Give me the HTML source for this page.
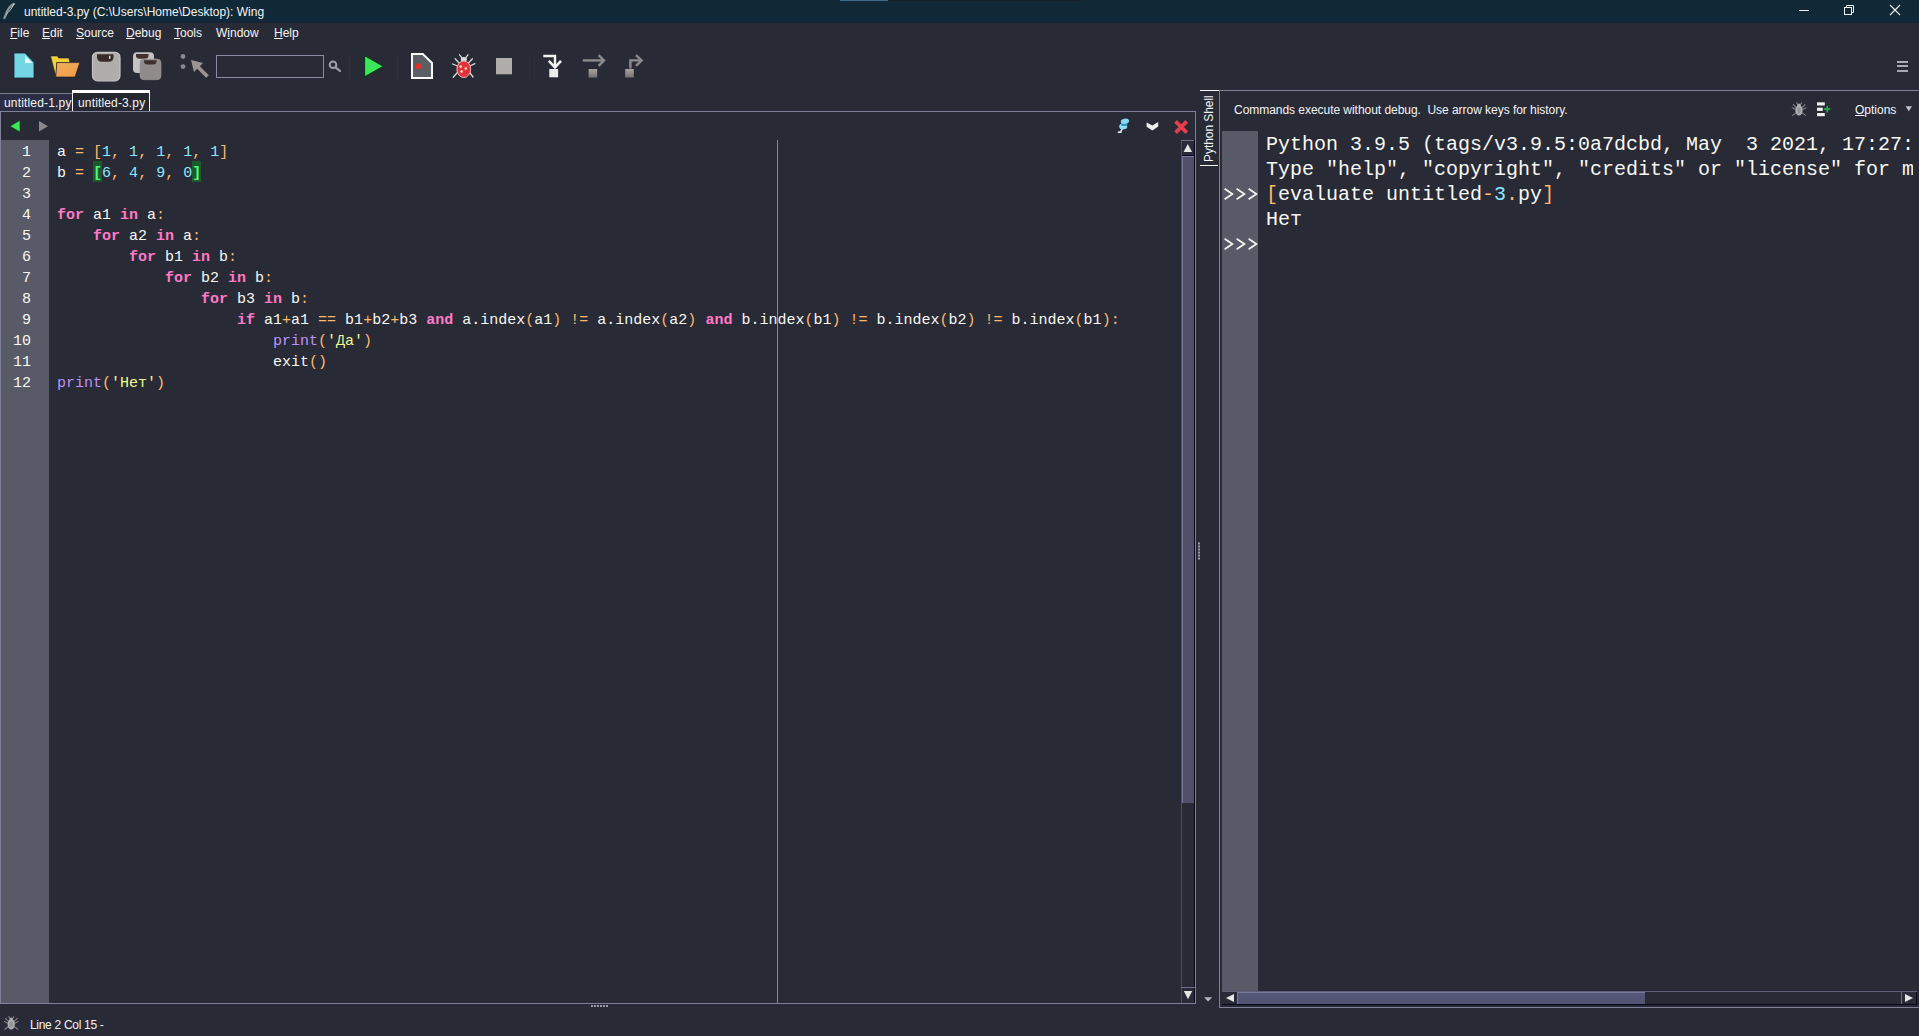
<!DOCTYPE html>
<html>
<head>
<meta charset="utf-8">
<title>Wing</title>
<style>
html,body{margin:0;padding:0;}
html{overflow:hidden;}
body{width:1919px;height:1036px;overflow:hidden;background:#282a36;font-family:"Liberation Sans",sans-serif;font-size:12px;color:#f4f4f4;position:relative;}
.abs{position:absolute;}
.t{position:absolute;white-space:pre;line-height:1;transform-origin:0 0;}
#titlebar{left:0;top:0;width:1919px;height:23px;background:linear-gradient(#112837 0,#112837 16px,#0f2a38 17px,#0f2a38 19px,#152638 20px,#162639 23px);}
.menu u,.ul{text-decoration:underline;text-decoration-thickness:1px;text-underline-offset:1px;}
.ln{position:absolute;background:#7f819a;}
.code{position:absolute;white-space:pre;font-family:"Liberation Mono",monospace;font-size:15px;line-height:21px;color:#f8f8f2;}
.num{position:absolute;white-space:pre;font-family:"Liberation Mono",monospace;font-size:15px;line-height:21px;color:#f8f8f2;text-align:right;}
.sh{position:absolute;white-space:pre;font-family:"Liberation Mono",monospace;font-size:20px;line-height:25px;color:#f8f8f2;}
.k{color:#ff79c6;font-weight:bold;}
.o{color:#ffb86c;}
.n{color:#8be9fd;}
.s{color:#f1fa8c;}
.b{color:#bd93f9;}
.bm{color:#50fa7b;font-weight:bold;}
</style>
</head>
<body>
<!-- title bar -->
<div id="titlebar" class="abs"></div>
<div class="t" id="title" style="left:24px;top:6px;">untitled-3.py (C:\Users\Home\Desktop): Wing</div>

<div class="abs" style="left:840px;top:0;width:48px;height:1px;background:#3f6c84;"></div>
<div class="abs" style="left:888px;top:0;width:192px;height:1px;background:#182028;"></div>
<!-- menu -->
<div class="t menu" id="m1" style="left:10px;top:27px;"><u>F</u>ile</div>
<div class="t menu" id="m2" style="left:42px;top:27px;"><u>E</u>dit</div>
<div class="t menu" id="m3" style="left:76px;top:27px;"><u>S</u>ource</div>
<div class="t menu" id="m4" style="left:126px;top:27px;"><u>D</u>ebug</div>
<div class="t menu" id="m5" style="left:174px;top:27px;"><u>T</u>ools</div>
<div class="t menu" id="m6" style="left:216px;top:27px;">W<u>i</u>ndow</div>
<div class="t menu" id="m7" style="left:274px;top:27px;"><u>H</u>elp</div>

<!-- editor frame -->
<div class="ln" style="left:0;top:111px;width:1196px;height:1px;"></div>
<div class="ln" style="left:0;top:93px;width:1px;height:911px;"></div>
<div class="ln" style="left:1195px;top:111px;width:1px;height:893px;"></div>
<div class="ln" style="left:0;top:1003px;width:1196px;height:1px;"></div>

<!-- gutter -->
<div class="abs" style="left:1px;top:140px;width:48px;height:863px;background:#585a67;"></div>

<!-- edge line -->
<div class="abs" style="left:777px;top:140px;width:1px;height:863px;background:#48a39b;"></div>

<!-- code -->
<div class="abs" style="left:93px;top:161px;width:9px;height:21px;background:#1c5a2c;"></div>
<div class="abs" style="left:192px;top:161px;width:9px;height:21px;background:#1c5a2c;"></div>
<div class="num" style="left:1px;top:142px;width:30px;">1
2
3
4
5
6
7
8
9
10
11
12</div>
<div class="code" id="code" style="left:57px;top:142px;">a <span class="o">=</span> <span class="o">[</span><span class="n">1</span><span class="o">,</span> <span class="n">1</span><span class="o">,</span> <span class="n">1</span><span class="o">,</span> <span class="n">1</span><span class="o">,</span> <span class="n">1</span><span class="o">]</span>
b <span class="o">=</span> <span class="bm">[</span><span class="n">6</span><span class="o">,</span> <span class="n">4</span><span class="o">,</span> <span class="n">9</span><span class="o">,</span> <span class="n">0</span><span class="bm">]</span>

<span class="k">for</span> a1 <span class="k">in</span> a<span class="o">:</span>
    <span class="k">for</span> a2 <span class="k">in</span> a<span class="o">:</span>
        <span class="k">for</span> b1 <span class="k">in</span> b<span class="o">:</span>
            <span class="k">for</span> b2 <span class="k">in</span> b<span class="o">:</span>
                <span class="k">for</span> b3 <span class="k">in</span> b<span class="o">:</span>
                    <span class="k">if</span> a1<span class="o">+</span>a1 <span class="o">==</span> b1<span class="o">+</span>b2<span class="o">+</span>b3 <span class="k">and</span> a.index<span class="o">(</span>a1<span class="o">)</span> <span class="o">!=</span> a.index<span class="o">(</span>a2<span class="o">)</span> <span class="k">and</span> b.index<span class="o">(</span>b1<span class="o">)</span> <span class="o">!=</span> b.index<span class="o">(</span>b2<span class="o">)</span> <span class="o">!=</span> b.index<span class="o">(</span>b1<span class="o">)</span><span class="o">:</span>
                        <span class="b">print</span><span class="o">(</span><span class="s">'Да'</span><span class="o">)</span>
                        exit<span class="o">()</span>
<span class="b">print</span><span class="o">(</span><span class="s">'Нет'</span><span class="o">)</span></div>


<!-- window controls -->
<svg class="abs" style="left:1780px;top:0;" width="139" height="23" viewBox="1780 0 139 23">
  <rect x="1799" y="10" width="10" height="1" fill="#f0f0f0"/>
  <rect x="1844.5" y="7.5" width="7" height="7" fill="none" stroke="#f0f0f0" stroke-width="1"/>
  <path d="M1846.5 7.5 V5.5 H1853.5 V12.5 H1851.5" fill="none" stroke="#f0f0f0" stroke-width="1"/>
  <path d="M1890 5 L1900 15 M1900 5 L1890 15" stroke="#f0f0f0" stroke-width="1.1" fill="none"/>
</svg>
<!-- app icon (feather) -->
<svg class="abs" style="left:0;top:0;" width="22" height="23" viewBox="0 0 22 23">
  <path d="M14 3.8 C10 6 7 10.5 6 14.5 L4.3 18" stroke="#8d949c" stroke-width="2.2" fill="none" stroke-linecap="round"/>
  <path d="M14 3.8 C12 8 9.5 11.5 6 14.5" stroke="#cdd2d6" stroke-width="1" fill="none"/>
</svg>

<!-- toolbar icons -->
<svg class="abs" style="left:0;top:44px;" width="700" height="44" viewBox="0 44 700 44">
  <defs>
    <linearGradient id="gsq" x1="0" y1="0" x2="0" y2="1"><stop offset="0" stop-color="#a8a4a4"/><stop offset="1" stop-color="#767272"/></linearGradient>
    <linearGradient id="gfold" x1="0" y1="0" x2="1" y2="1"><stop offset="0" stop-color="#f0b060"/><stop offset="1" stop-color="#f09a40"/></linearGradient>
  </defs>
  <!-- new -->
  <path d="M14 53 H25 L34 62.5 V78 H14 Z" fill="#74d6e4" stroke="#1a2530" stroke-width="0.8"/>
  <path d="M25 56 V63 H32.5 Z" fill="#e8fbff"/>
  <!-- open -->
  <path d="M50.5 56 H57.6 L58.6 58 H68.8 L70 62.6 H56.8 L56 77 Z" fill="#f2d23c" stroke="#1a1a20" stroke-width="0.6"/>
  <path d="M56.8 62.6 H79.8 L75 77 H55.8 Z" fill="url(#gfold)" stroke="#1a1a20" stroke-width="0.6"/>
  <!-- save -->
  <rect x="92.5" y="52.3" width="27.5" height="28.5" rx="5" fill="#b0aeaa" stroke="#c6c4c6" stroke-width="1.2"/>
  <path d="M97 54.2 H113.5 V57 Q113.5 61.8 108.5 61.8 H102 Q97 61.8 97 57 Z" fill="#3a2b2a"/>
  <rect x="109" y="55.8" width="1.4" height="3" fill="#e8e0e0"/>
  <!-- save all -->
  <rect x="133" y="52.3" width="21" height="20.7" rx="4" fill="#c4c2c2"/>
  <path d="M136 54 H148.5 V55.5 Q148.5 58.8 145 58.8 H139.5 Q136 58.8 136 55.5 Z" fill="#40302c"/>
  <rect x="140" y="59" width="21" height="20.7" rx="4" fill="#8f8b8b" stroke="#a09c9c" stroke-width="0.6"/>
  <path d="M144 60.2 H156.5 V61.5 Q156.5 64.5 153 64.5 H147.5 Q144 64.5 144 61.5 Z" fill="#40302c"/>
  <!-- goto-definition: dots + arrow -->
  <circle cx="183" cy="56.5" r="2.4" fill="#8a8894"/>
  <circle cx="183" cy="66.6" r="2.4" fill="#8a8894"/>
  <path d="M191 60 L203 63 L199.84 66.16 L208.84 75.16 L206.16 77.84 L197.16 68.84 L194 72 Z" fill="#9a9492"/>
  <!-- search box -->
  <rect x="216.5" y="55.5" width="107" height="22" fill="none" stroke="#8a8ca6" stroke-width="1"/>
  <circle cx="333" cy="64.8" r="3.3" fill="none" stroke="#a0a0aa" stroke-width="2"/>
  <path d="M335.5 67.3 L340 71" stroke="#a0a0aa" stroke-width="2.2" stroke-linecap="round"/>
  <!-- run -->
  <path d="M364.5 55.5 L383.5 66.3 L364.5 77 Z" fill="#3ce65a" stroke="#0c3a18" stroke-width="1.2"/>
  <!-- doc with record -->
  <path d="M412 54 H422.8 L432 63 V78 H412 Z" fill="#5a5f66" stroke="#f8f8f8" stroke-width="2"/>
  <circle cx="418.3" cy="66.2" r="3" fill="#e23028"/>
  <!-- bug -->
  <g stroke="#d8dcd8" stroke-width="1.3" stroke-linecap="round" fill="none">
    <path d="M459.6 54.8 L462.3 58.3"/><path d="M468 54.8 L465.3 58.3"/>
    <path d="M455.2 58.7 L459.5 63.5"/><path d="M472.4 58.7 L468 63.5"/>
    <path d="M452.6 64 L457.5 66"/><path d="M474.8 63.6 L470 66"/>
    <path d="M453.2 77.2 L458.3 71.5"/><path d="M473 77 L469 71.5"/>
  </g>
  <ellipse cx="463.8" cy="59.5" rx="3" ry="2.4" fill="#d8dcd8"/>
  <ellipse cx="463.8" cy="69.2" rx="6.9" ry="8.3" fill="#e1313e" stroke="#f2b8b8" stroke-width="1"/>
  <circle cx="460.7" cy="66.6" r="1.3" fill="#ffe0b0"/>
  <circle cx="465.8" cy="68.5" r="1.3" fill="#ffe0b0"/>
  <circle cx="461.6" cy="71.6" r="1.3" fill="#ffe0b0"/>
  <!-- stop -->
  <rect x="496" y="58" width="16" height="16.3" fill="#b0aeaa"/>
  <!-- step into -->
  <path d="M543.3 56 H555 V66" fill="none" stroke="#f2f2f2" stroke-width="2.4"/>
  <path d="M548.8 60.8 L555 67.3 L561 60.8" fill="none" stroke="#f2f2f2" stroke-width="2.6"/>
  <rect x="549.3" y="69" width="8.8" height="8.3" fill="#ececec"/>
  <!-- step over -->
  <path d="M582.8 60.4 H603" fill="none" stroke="#8c8a8c" stroke-width="2.4"/>
  <path d="M598.6 55.2 L604 60.4 L598.6 65.8" fill="none" stroke="#8c8a8c" stroke-width="2.4"/>
  <rect x="588.6" y="69" width="8.6" height="8.5" fill="url(#gsq)"/>
  <!-- step out -->
  <path d="M630.4 68.5 V60.4 H641" fill="none" stroke="#8c8a8c" stroke-width="2.4"/>
  <path d="M636 55.2 L641.6 60.4 L636 65.8" fill="none" stroke="#8c8a8c" stroke-width="2.4"/>
  <rect x="625.2" y="69" width="8.6" height="8.5" fill="url(#gsq)"/>
</svg>
<div class="abs" style="left:349px;top:56px;width:1px;height:24px;background:#2e303d;"></div>
<div class="abs" style="left:397px;top:56px;width:1px;height:24px;background:#2e303d;"></div>
<div class="abs" style="left:529px;top:56px;width:1px;height:24px;background:#2e303d;"></div>
<!-- hamburger -->
<div class="abs" style="left:1897px;top:61px;width:11px;height:2px;background:#a8a8b8;"></div>
<div class="abs" style="left:1897px;top:65px;width:11px;height:2px;background:#a8a8b8;"></div>
<div class="abs" style="left:1897px;top:70px;width:11px;height:2px;background:#a8a8b8;"></div>

<!-- tabs -->
<div class="abs" style="left:0px;top:93px;width:72px;height:18px;background:#2b2d42;border-top:1px solid #7c7e98;box-sizing:border-box;"></div>
<div class="t" id="tab1" style="left:4px;top:97px;letter-spacing:0.17px;">untitled-1.py</div>
<div class="abs" style="left:72px;top:90px;width:78px;height:21px;border:1px solid #f4f4f4;border-top:3px solid #ffffff;border-bottom:none;box-sizing:border-box;background:#262730;"></div>
<div class="t" id="tab2" style="left:78px;top:97px;letter-spacing:0.15px;">untitled-3.py</div>

<!-- nav arrows -->
<svg class="abs" style="left:0;top:112px;" width="60" height="28" viewBox="0 112 60 28">
  <path d="M20 120.3 L10 126.2 L20 132 Z" fill="#3ce65a" stroke="#0c3a18" stroke-width="0.6"/>
  <path d="M39 121 L48 126.2 L39 131.4 Z" fill="#8a888c"/>
</svg>
<!-- editor top right icons -->
<svg class="abs" style="left:1110px;top:112px;" width="85" height="28" viewBox="1110 112 85 28">
  <path d="M1122.4 128.6 L1120.4 132" stroke="#cdeaf4" stroke-width="1.5"/>
  <ellipse cx="1119.7" cy="132.2" rx="2.2" ry="0.9" fill="#e4e6ea"/>
  <ellipse cx="1123.2" cy="126.4" rx="4" ry="2.9" fill="#8fdff4"/>
  <ellipse cx="1124.2" cy="123.9" rx="3.4" ry="2" fill="#2f93ba"/>
  <ellipse cx="1124.9" cy="121.3" rx="4.2" ry="2.6" fill="#86d8ee" transform="rotate(-12 1124.9 121.3)"/>
  <path d="M1146.6 122.4 L1152.4 125.6 L1158.2 122 V126.6 L1152.4 130.6 L1146.6 126.8 Z" fill="#eceef0"/>
  <path d="M1175.6 121.4 L1186.8 132.6 M1186.8 121.4 L1175.6 132.6" stroke="#e63e4a" stroke-width="3.8" fill="none"/>
</svg>

<!-- editor vertical scrollbar -->
<div class="abs" style="left:1181px;top:140px;width:14px;height:863px;background:#282a36;"></div>
<div class="abs" style="left:1181px;top:140px;width:1px;height:863px;background:#4c4e60;"></div>
<div class="abs" style="left:1194px;top:140px;width:1px;height:863px;background:#06061a;"></div>
<div class="abs" style="left:1181px;top:140px;width:13px;height:1px;background:#6e7088;"></div>
<div class="abs" style="left:1182px;top:155px;width:12px;height:1px;background:#06061a;"></div>
<div class="abs" style="left:1182px;top:157px;width:12px;height:646px;background:#50506a;"></div>
<div class="abs" style="left:1182px;top:157px;width:1px;height:646px;background:#777a98;"></div>
<div class="abs" style="left:1182px;top:156px;width:12px;height:1px;background:#777a98;"></div>
<div class="abs" style="left:1181px;top:987px;width:14px;height:1px;background:#6e7088;"></div>
<svg class="abs" style="left:1181px;top:140px;" width="14" height="863" viewBox="1181 140 14 863">
  <path d="M1183.6 152 L1187.8 144 L1192 152 Z" fill="#e6e6e6"/>
  <path d="M1183.8 991 L1192.2 991 L1188 999.2 Z" fill="#e6e6e6"/>
</svg>

<!-- splitter dots -->
<svg class="abs" style="left:1196px;top:540px;" width="6" height="22" viewBox="1196 540 6 22">
  <g fill="#9c9cac"><rect x="1198" y="542.5" width="2" height="2"/><rect x="1198" y="545.5" width="2" height="2"/><rect x="1198" y="548.5" width="2" height="2"/><rect x="1198" y="551.5" width="2" height="2"/><rect x="1198" y="554.5" width="2" height="2"/><rect x="1198" y="557.5" width="2" height="2"/></g>
</svg>
<svg class="abs" style="left:588px;top:1004px;" width="24" height="5" viewBox="588 1004 24 5">
  <g fill="#9c9cac"><rect x="591" y="1005" width="2" height="2"/><rect x="594" y="1005" width="2" height="2"/><rect x="597" y="1005" width="2" height="2"/><rect x="600" y="1005" width="2" height="2"/><rect x="603" y="1005" width="2" height="2"/><rect x="606" y="1005" width="2" height="2"/></g>
</svg>

<!-- python shell vertical tab -->
<div class="abs" style="left:1200px;top:90px;width:19px;height:1px;background:#f4f4f4;"></div>
<div class="abs" style="left:1200px;top:165px;width:18px;height:1px;background:#f4f4f4;"></div>
<div class="t" id="pstab" style="left:1203px;top:161.5px;letter-spacing:-0.06px;transform:rotate(-90deg);transform-origin:0 0;">Python Shell</div>
<svg class="abs" style="left:1202px;top:994px;" width="14" height="10" viewBox="1202 994 14 10">
  <path d="M1204 997.2 H1212.2 L1208.1 1001.6 Z" fill="#b4b4c4"/>
</svg>

<!-- shell header icons -->
<svg class="abs" style="left:1785px;top:96px;" width="134" height="26" viewBox="1785 96 134 26">
  <g stroke="#80828a" stroke-width="1.1" stroke-linecap="round" fill="none">
    <path d="M1796.6 102.8 L1798.2 105.2"/><path d="M1801.6 102.8 L1800 105.2"/>
    <path d="M1793.2 104.6 L1796.8 108"/><path d="M1805 104.6 L1801.4 108"/>
    <path d="M1792.2 107.8 L1796 109.6"/><path d="M1806 107.8 L1802.2 109.6"/>
    <path d="M1792.6 115.4 L1796.6 112.4"/><path d="M1805.6 115.4 L1801.6 112.4"/>
  </g>
  <ellipse cx="1799" cy="105.2" rx="1.8" ry="1.6" fill="#a8aaae"/>
  <ellipse cx="1799" cy="110.4" rx="3.6" ry="5.2" fill="#aeb0b4"/>
  <ellipse cx="1799" cy="110.6" rx="1.8" ry="3.2" fill="#92949a"/>
  <rect x="1817" y="102.3" width="7.8" height="3.2" fill="#efefef"/>
  <rect x="1817" y="107.7" width="5.8" height="3.2" fill="#efefef"/>
  <rect x="1817" y="113" width="7.8" height="3.2" fill="#efefef"/>
  <path d="M1824 109.2 H1830.4 M1827.2 106 V112.4" stroke="#2ca548" stroke-width="1.8"/>
  <path d="M1905.6 106.2 H1912 L1908.8 111.2 Z" fill="#c0c0d0"/>
</svg>

<!-- shell horizontal scrollbar -->
<div class="abs" style="left:1222px;top:991px;width:695px;height:1px;background:#5e6076;"></div>
<div class="abs" style="left:1222px;top:1004px;width:695px;height:1px;background:#06061a;"></div>
<div class="abs" style="left:1238px;top:992px;width:407px;height:12px;background:linear-gradient(#56587c,#525470);"></div>
<div class="abs" style="left:1238px;top:992px;width:407px;height:1px;background:#777a98;"></div>
<div class="abs" style="left:1237px;top:992px;width:1px;height:12px;background:#777a98;"></div>
<div class="abs" style="left:1901px;top:992px;width:1px;height:12px;background:#6e7088;"></div>
<div class="abs" style="left:1916px;top:992px;width:1px;height:13px;background:#06061a;"></div>
<svg class="abs" style="left:1222px;top:991px;" width="697" height="15" viewBox="1222 991 697 15">
  <path d="M1234 994 L1226 998 L1234 1002 Z" fill="#e6e6e6"/>
  <path d="M1905 994 L1913 998 L1905 1002 Z" fill="#e6e6e6"/>
</svg>

<!-- status bug -->
<svg class="abs" style="left:0;top:1012px;" width="24" height="24" viewBox="0 1012 24 24">
  <g stroke="#80828a" stroke-width="1.1" stroke-linecap="round" fill="none">
    <path d="M8.8 1016.6 L10.4 1019"/><path d="M13.8 1016.6 L12.2 1019"/>
    <path d="M5.4 1018.4 L9 1021.8"/><path d="M17.2 1018.4 L13.6 1021.8"/>
    <path d="M4.4 1021.6 L8.2 1023.4"/><path d="M18.2 1021.6 L14.4 1023.4"/>
    <path d="M4.8 1029.2 L8.8 1026.2"/><path d="M17.8 1029.2 L13.8 1026.2"/>
  </g>
  <ellipse cx="11.2" cy="1019" rx="1.8" ry="1.6" fill="#a8aaae"/>
  <ellipse cx="11.2" cy="1024.2" rx="3.6" ry="5.2" fill="#aeb0b4"/>
  <ellipse cx="11.2" cy="1024.4" rx="1.8" ry="3.2" fill="#92949a"/>
</svg>

<!-- status bar -->
<div class="t" id="status" style="left:30px;top:1019px;letter-spacing:-0.3px;">Line 2 Col 15 -</div>

<!-- right panel -->
<div class="ln" style="left:1219px;top:90px;width:700px;height:1px;"></div>
<div class="ln" style="left:1219px;top:90px;width:1px;height:918px;"></div>
<div class="ln" style="left:1219px;top:1007px;width:700px;height:1px;"></div>
<div class="abs" style="left:1222px;top:131px;width:36px;height:860px;background:#585a67;"></div>
<div class="t" id="cmdhint" style="left:1234px;top:104px;letter-spacing:-0.04px;">Commands execute without debug.  Use arrow keys for history.</div>
<div class="t" id="options" style="left:1855px;top:104px;"><u class="ul">O</u>ptions</div>

<div class="sh" id="shell" style="left:1266px;top:132px;width:646.5px;overflow:hidden;">Python 3.9.5 (tags/v3.9.5:0a7dcbd, May  3 2021, 17:27:52) [MSC v.1928 64 bit (AMD64)]
Type "help", "copyright", "credits" or "license" for more information.
<span class="o">[</span>evaluate untitled<span class="o">-</span><span class="n">3</span><span class="o">.</span>py<span class="o">]</span>
Нет
</div>
<svg class="abs" style="left:1222px;top:180px;" width="36" height="80" viewBox="1222 180 36 80">
  <g fill="none" stroke="#f8f8f2" stroke-width="1.7">
    <path d="M1224.6 188.8 L1232.4 194 L1224.6 199.2"/><path d="M1236.6 188.8 L1244.4 194 L1236.6 199.2"/><path d="M1248.6 188.8 L1256.4 194 L1248.6 199.2"/>
    <path d="M1224.6 238.8 L1232.4 244 L1224.6 249.2"/><path d="M1236.6 238.8 L1244.4 244 L1236.6 249.2"/><path d="M1248.6 238.8 L1256.4 244 L1248.6 249.2"/>
  </g>
</svg>

</body>
</html>
